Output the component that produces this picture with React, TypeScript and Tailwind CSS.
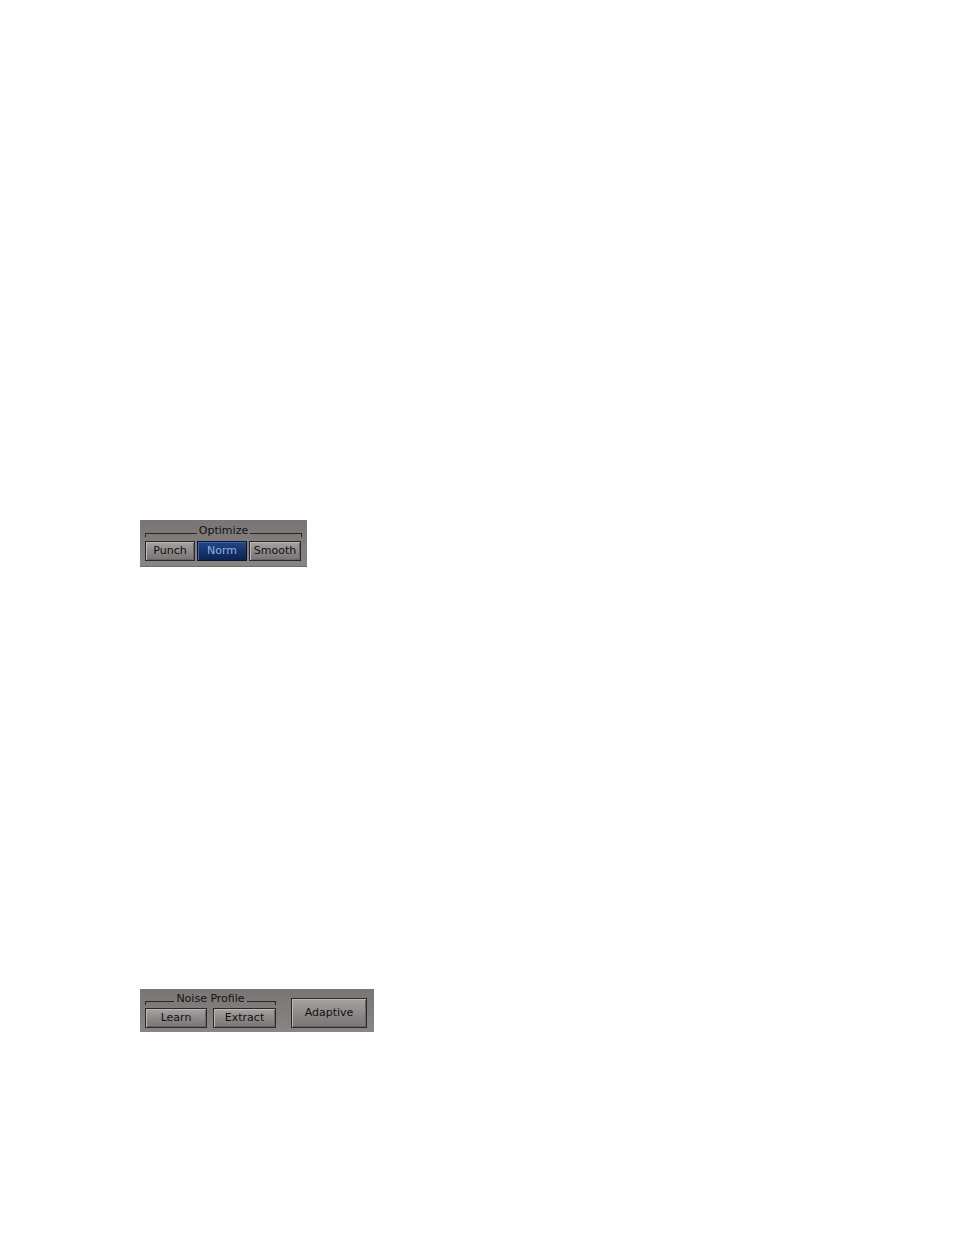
const font = { fontFamily: '"DejaVu Sans", Verdana, sans-serif' };

const GroupTitle = ({ label }: { label: string }) => (
    <div className="flex items-end h-[14px] text-[11px] leading-none text-[#141212]">
        <div className="flex-1 h-[4px] border-l border-t border-[#2a2626] mb-[-1px]" />
        <span className="px-[2px]">{label}</span>
        <div className="flex-1 h-[4px] border-r border-t border-[#2a2626] mb-[-1px]" />
    </div>
);

const Btn = ({ label, w, h = 20, active = false }: { label: string, w: number, h?: number, active?: boolean }) => (
    <div
        style={{ width: w, height: h }}
        className={
            active
                ? "flex items-center justify-center text-[11px] text-[#8fb0e6] border border-[#0c1630] bg-gradient-to-b from-[#25488a] via-[#163466] to-[#0d2452] shadow-[inset_1px_1px_0_#3d62a8]"
                : "flex items-center justify-center text-[11px] text-[#110f0f] border border-[#2c2828] bg-gradient-to-b from-[#a8a3a3] via-[#8f8a8a] to-[#7a7575] shadow-[inset_1px_1px_0_#bdb8b8,inset_-1px_-1px_0_#6a6565]"
        }
    >
        {label}
    </div>
);

export default function App() {
    return (
        <div className="w-[954px] h-[1235px] bg-white pt-[520px] pl-[140px]" style={font}>
            {/* Optimize */}
            <div className="w-[167px] h-[47px] bg-gradient-to-b from-[#7a7575] to-[#8a8585] px-[5px] pt-[2px] border-b border-[#6e6a6a]">
                <GroupTitle label="Optimize" />
                <div className="flex gap-[2px] mt-[5px]">
                    <Btn label="Punch" w={50} />
                    <Btn label="Norm" w={50} active />
                    <Btn label="Smooth" w={52} />
                </div>
            </div>

            {/* Noise Profile */}
            <div className="mt-[422px] w-[234px] h-[43px] bg-gradient-to-b from-[#7a7575] to-[#8a8585] flex px-[5px]">
                <div className="w-[131px] pt-[1px]">
                    <GroupTitle label="Noise Profile" />
                    <div className="flex gap-[6px] mt-[4px]">
                        <Btn label="Learn" w={62} />
                        <Btn label="Extract" w={63} />
                    </div>
                </div>
                <div className="ml-[15px] pt-[9px]">
                    <Btn label="Adaptive" w={76} h={30} />
                </div>
            </div>
        </div>
    );
}
